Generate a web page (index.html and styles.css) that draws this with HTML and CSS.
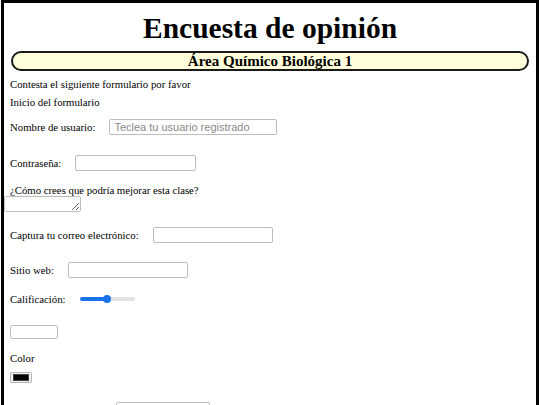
FILE: index.html
```html
<!DOCTYPE html>
<html lang="es">
<head>
<meta charset="utf-8">
<title>Encuesta de opinión</title>
<link rel="stylesheet" href="styles.css">
</head>
<body>
<div class="page">
  <h1 class="title">Encuesta de opinión</h1>
  <h2 class="pill">Área Químico Biológica 1</h2>
  <p class="line first">Contesta el siguiente formulario por favor</p>
  <p class="line">Inicio del formulario</p>
  <form class="form">
    <div class="row r-user"><label class="lbl">Nombre de usuario:</label><input class="field w168" type="text" placeholder="Teclea tu usuario registrado"></div>
    <div class="row r-pass"><label class="lbl">Contraseña:</label><input class="field w121" type="password"></div>
    <div class="block b-area">
      <label class="lbl">¿Cómo crees que podría mejorar esta clase?</label>
      <textarea class="area"></textarea>
    </div>
    <div class="row r-mail"><label class="lbl">Captura tu correo electrónico:</label><input class="field w120" type="email"></div>
    <div class="row r-web"><label class="lbl">Sitio web:</label><input class="field w120" type="url"></div>
    <div class="row r-rate"><label class="lbl">Calificación:</label><input class="range" type="range" min="0" max="10" value="5"></div>
    <div class="row r-num"><input class="field num" type="number"></div>
    <div class="block b-color">
      <label class="lbl">Color</label>
      <input class="color" type="color" value="#000000">
    </div>
    <div class="row r-date"><label class="lbl hid">Fecha de nacimiento:</label><input class="field w94" type="text"></div>
  </form>
</div>
</body>
</html>
```
FILE: styles.css
```css
html, body { margin: 0; padding: 0; background: #fff; }
body { font-family: "Liberation Serif", "Times New Roman", serif; color: #000; }
.page {
  margin: 0 1px;
  border: 3px solid #000;
  min-height: 440px;
  padding: 0 0 20px 0;
  box-sizing: border-box;
}
.title {
  font-size: 29.5px;
  font-weight: bold;
  text-align: center;
  margin: 0;
  padding: 8px 0 5px;
  line-height: 35px;
}
.pill {
  margin: 0 7px;
  height: 20px;
  box-sizing: border-box;
  border: 2px solid #1a1a1a;
  border-radius: 11px;
  background: #ffffdc;
  font-size: 15px;
  line-height: 16px;
  text-align: center;
  font-weight: bold;
}
.line {
  margin: 0;
  padding-left: 6px;
  font-size: 10.75px;
  line-height: 18px;
}
.first { margin-top: 4px; }
.form { display: flex; flex-direction: column; margin-top: 8px; }
.row {
  display: flex;
  align-items: center;
  padding-left: 6px;
  height: 16px;
}
.lbl { font-size: 10.75px; line-height: 14px; }
.field {
  box-sizing: border-box;
  height: 16px;
  margin: 0 0 0 14px;
  border: 1px solid #bdbdbd;
  border-radius: 2px;
  padding: 1px 4px;
  font-family: "Liberation Sans", Arial, sans-serif;
  font-size: 11px;
  background: #fff;
}
.field::placeholder { color: #8a8a8a; }
.w168 { width: 168px; }
.w121 { width: 121px; }
.w120 { width: 120px; }
.w94 { width: 94px; }
.num { margin-left: 0; width: 48px; height: 14px; }

.r-pass { margin-top: 20px; }
.block { display: flex; flex-direction: column; align-items: flex-start; padding-left: 6px; }
.b-area { margin-top: 12px; }
.area {
  margin: -1px 0 0 -6px;
  width: 77px;
  height: 16px;
  box-sizing: border-box;
  border: 1px solid #bdbdbd;
  border-radius: 2px;
  padding: 0;
  resize: both;
}
.r-mail { margin-top: 15px; }
.r-web { margin-top: 19px; }
.r-rate { margin-top: 13px; }
.r-num { margin-top: 18px; height: 14px; }
.b-color { margin-top: 12px; }
.r-date { margin-top: 19px; }

.range {
  -webkit-appearance: none;
  appearance: none;
  width: 55px;
  height: 8px;
  margin: 0 0 0 14px;
  background: transparent;
}
.range::-webkit-slider-runnable-track {
  height: 4px;
  border-radius: 2px;
  background: linear-gradient(to right, #1a73e8 0, #1a73e8 50%, #e3e3e3 50%, #e3e3e3 100%);
}
.range::-webkit-slider-thumb {
  -webkit-appearance: none;
  appearance: none;
  width: 8px;
  height: 8px;
  margin-top: -2px;
  border-radius: 50%;
  background: #1a73e8;
  border: none;
}
.color {
  -webkit-appearance: none;
  appearance: none;
  margin: 7px 0 0 0;
  width: 22px;
  height: 11px;
  padding: 1px 2px;
  border: 1px solid #b5b5b5;
  border-radius: 2px;
  background: #efefef;
  box-sizing: border-box;
}
.color::-webkit-color-swatch-wrapper { padding: 0; }
.color::-webkit-color-swatch { border: 1px solid #444; border-radius: 0; }
.hid { visibility: hidden; }
```
